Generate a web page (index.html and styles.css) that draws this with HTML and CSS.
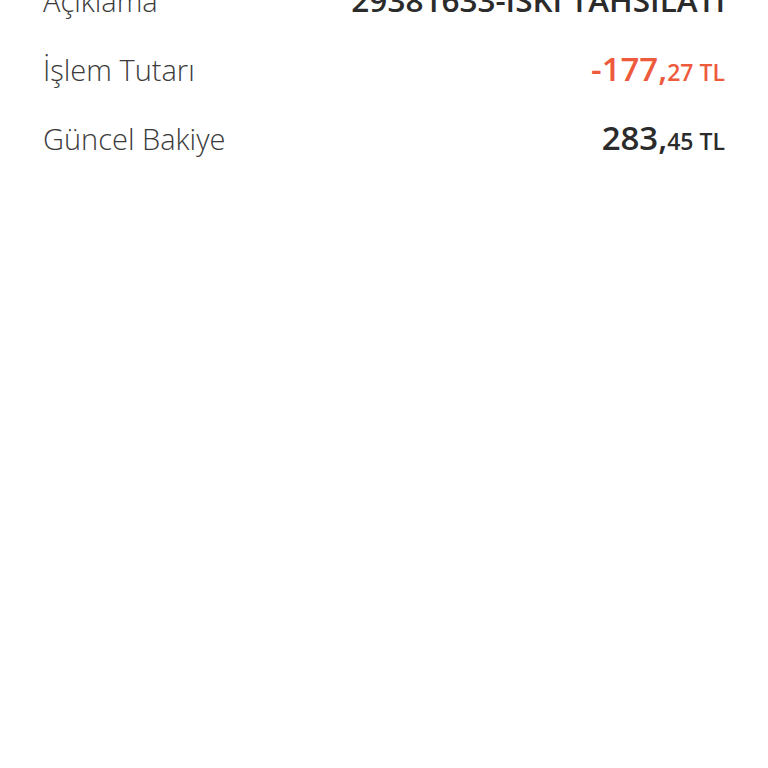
FILE: index.html
```html
<!DOCTYPE html>
<html lang="tr">
<head>
<meta charset="utf-8">
<link rel="stylesheet" href="styles.css">
</head>
<body>
<div class="details">
  <div class="row">
    <span class="label">Açıklama</span>
    <span class="value text">29381633-İSKİ TAHSİLATI</span>
  </div>
  <div class="row">
    <span class="label">İşlem Tutarı</span>
    <span class="value amount negative"><span class="int">-177,</span><span class="dec">27 TL</span></span>
  </div>
  <div class="row">
    <span class="label">Güncel Bakiye</span>
    <span class="value amount"><span class="int">283,</span><span class="dec">45 TL</span></span>
  </div>
</div>
</body>
</html>
```

FILE: styles.css
```css
html, body {
  margin: 0;
  padding: 0;
  background: #ffffff;
}
body {
  width: 768px;
  height: 768px;
  overflow: hidden;
}
.details {
  margin-top: -35px;
  padding: 0 43px;
}
.row {
  display: flex;
  justify-content: space-between;
  align-items: baseline;
  height: 69px;
  line-height: 69px;
}
.label {
  font-family: "Open Sans", sans-serif;
  font-weight: 300;
  font-size: 29px;
  color: #3a3a3a;
}
.value {
  font-family: "Open Sans", sans-serif;
  font-weight: 600;
  color: #2b2b2b;
}
.text {
  font-size: 31.5px;
}
.int {
  font-size: 33px;
}
.dec {
  font-size: 23px;
}
.negative {
  color: #ee5a3c;
}
```
